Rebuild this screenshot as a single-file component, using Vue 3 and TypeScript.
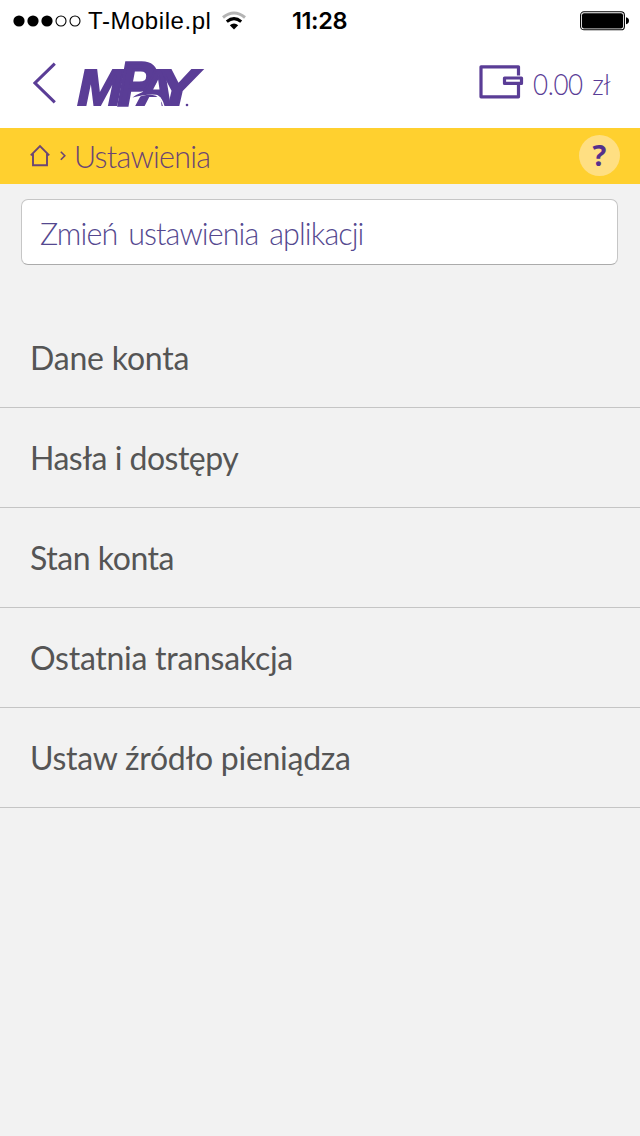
<script setup lang="ts">
interface MenuItem {
  id: string
  label: string
}

const items: MenuItem[] = [
  { id: 'account', label: 'Dane konta' },
  { id: 'access', label: 'Hasła i dostępy' },
  { id: 'balance', label: 'Stan konta' },
  { id: 'last', label: 'Ostatnia transakcja' },
  { id: 'source', label: 'Ustaw źródło pieniądza' },
]
</script>

<template>
  <div class="screen">
    <div class="status">
      <svg class="signal" width="68" height="14" viewBox="0 0 68 14">
        <circle cx="6" cy="7" r="5.6" />
        <circle cx="20" cy="7" r="5.6" />
        <circle cx="34" cy="7" r="5.6" />
        <circle class="off" cx="48" cy="7" r="5" />
        <circle class="off" cx="62" cy="7" r="5" />
      </svg>
      <span class="carrier">T-Mobile.pl</span>
      <svg class="wifi" width="26" height="20" viewBox="0 0 26 20">
        <path d="M2 6.5Q13 -2.6 24 6.5" stroke="#b4b4b4" stroke-width="3" fill="none" />
        <path d="M5.8 10.6Q13 4.6 20.2 10.6" stroke="#000" stroke-width="3" fill="none" />
        <path d="M8.8 14.2Q13 10.8 17.2 14.2L13 18.6Z" />
      </svg>
      <span class="time">11:28</span>
      <svg class="battery" width="49" height="20" viewBox="0 0 49 20">
        <rect x=".6" y=".8" width="43.8" height="18" rx="3.4" fill="none" stroke="#000" stroke-width="1.1" />
        <rect x="2" y="2.2" width="41" height="15.2" rx="2" />
        <path d="M46 6.3Q49 7 49 9.8T46 13.3Z" />
      </svg>
    </div>

    <header class="header">
      <svg class="back" width="24" height="42" viewBox="0 0 24 42">
        <path d="M21.8 1.6L2 21L21.8 40.4" fill="none" stroke="#5a3d96" stroke-width="3" />
      </svg>
      <svg class="logo" width="140" height="80" viewBox="-4 -15 140 80">
        <text class="wordmark" y="46" font-size="50">
          <tspan x="2.500" textLength="45" lengthAdjust="spacingAndGlyphs">M</tspan><tspan x="43" font-size="62" textLength="38" lengthAdjust="spacingAndGlyphs" stroke-width="3.400">P</tspan><tspan x="63" textLength="35" lengthAdjust="spacingAndGlyphs">A</tspan><tspan x="82" textLength="40" lengthAdjust="spacingAndGlyphs">Y</tspan>
        </text>
        <path d="M60 38.800Q72 33 81 36Q87 39 89 48" fill="none" stroke="#fff" stroke-width="1.500" />
        <path d="M57.500 38.500Q68 30.500 80 31.500Q89 33 92 40Q83 32 57.500 38.500Z" fill="#5a3d96" />
        <circle cx="112" cy="46" r="1.300" fill="#5a3d96" />
      </svg>
      <div class="wallet">
        <svg width="46" height="36" viewBox="0 0 46 36">
          <g fill="none" stroke="#5a3d96" stroke-width="3.200" stroke-linejoin="round">
            <path d="M39.500 11.500V2.800H2V32.800H39.500V21" />
            <rect x="25.500" y="14" width="17" height="5.400" />
          </g>
        </svg>
        <span class="amount">0.00 zł</span>
      </div>
    </header>

    <nav class="crumbs">
      <svg class="home" width="22" height="24" viewBox="0 0 22 24">
        <path d="M1.800 11.300L11 2L20.200 11.300M4 9.500V21.200H18V9.500" fill="none" stroke="#6b4574" stroke-width="1.900" />
      </svg>
      <svg class="sep" width="8" height="12" viewBox="0 0 8 12">
        <path d="M1.800 1.800L5.800 5.800L1.800 9.800" fill="none" stroke="#6b4574" stroke-width="1.600" />
      </svg>
      <span class="crumb">Ustawienia</span>
      <button class="help">?</button>
    </nav>

    <div class="title">
      <span>Zmień ustawienia aplikacji</span>
    </div>

    <ul class="menu">
      <li v-for="item in items" :key="item.id" :class="['row', item.id]">
        <span>{{ item.label }}</span>
      </li>
    </ul>
  </div>
</template>

<style>
body {
  margin: 0;
  background: #f2f2f2;
}
</style>

<style scoped>
.screen {
  width: 640px;
  height: 1136px;
  overflow: hidden;
  background: #f2f2f2;
  font-family: Lato, 'Open Sans', sans-serif;
}

.status {
  display: flex;
  align-items: center;
  box-sizing: border-box;
  height: 40px;
  padding: 1px 11px 0 13px;
  background: #fff;
  color: #000;
  white-space: nowrap;
}

.signal {
  margin-right: 7px;
}

.off {
  fill: none;
  stroke: #000;
  stroke-width: 1.1;
}

.carrier {
  width: 133px;
  font: 24px/40px 'Liberation Sans', sans-serif;
  letter-spacing: 0.55px;
}

.time {
  margin-left: 45px;
  padding-top: 1px;
  font: 600 23.5px/40px Inter, sans-serif;
  letter-spacing: -0.4px;
}

.battery {
  margin-left: auto;
}

.header {
  display: flex;
  align-items: flex-start;
  box-sizing: border-box;
  height: 88px;
  padding: 19px 28px 0 32px;
  background: #fff;
}

.back {
  margin: 3px 0 0 1px;
}

.logo {
  margin: -15px 0 -15px 14px;
}

.wordmark {
  font-family: 'Liberation Sans', sans-serif;
  font-weight: 700;
  font-style: italic;
  fill: #5a3d96;
  stroke: #5a3d96;
  stroke-width: 2.2px;
}

.wallet {
  display: flex;
  align-items: center;
  margin: 5px 0 0 auto;
}

.amount {
  width: 79px;
  margin-left: 8px;
  padding-top: 4px;
  font-size: 29.5px;
  font-weight: 300;
  line-height: 32px;
  letter-spacing: -0.4px;
  word-spacing: 3px;
  white-space: nowrap;
  color: #5a3d96;
  transform: scaleX(0.88);
  transform-origin: left center;
}

.crumbs {
  display: flex;
  align-items: center;
  box-sizing: border-box;
  height: 56px;
  padding: 0 20px 0 29px;
  background: #ffd02f;
}

.sep {
  margin: 0 0 0 8px;
}

.crumb {
  margin-left: 7px;
  font-size: 30.5px;
  font-weight: 300;
  line-height: 56px;
  letter-spacing: -0.75px;
  color: #6b4574;
}

.help {
  width: 41px;
  height: 41px;
  margin: 0 0 2px auto;
  padding: 0;
  border: 0;
  border-radius: 50%;
  background: #ffdf82;
  color: #55308c;
  font: 700 29px/39px 'Open Sans', sans-serif;
  padding-bottom: 2px;
}

.title {
  box-sizing: border-box;
  height: 66px;
  margin: 15px 22px 0 21px;
  padding-left: 18px;
  border: 1px solid #c6c6c6;
  border-bottom-color: #ababab;
  border-radius: 7px;
  background: #fff;
  color: #54488f;
  font-size: 30.5px;
  font-weight: 300;
  line-height: 66px;
  letter-spacing: -0.9px;
  word-spacing: 3.5px;
}

.menu {
  margin: 43px 0 0;
  padding: 0;
  list-style: none;
}

.row {
  box-sizing: border-box;
  height: 100px;
  padding-left: 30px;
  border-bottom: 1px solid #c5c5c5;
  color: #555;
  font-size: 32px;
  line-height: 99px;
  letter-spacing: -0.27px;
}

.account {
  letter-spacing: -0.2px;
}

.access {
  letter-spacing: -0.5px;
}

.balance {
  letter-spacing: -0.45px;
}
</style>
